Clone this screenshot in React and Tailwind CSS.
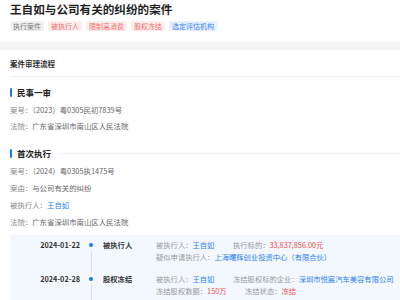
import React from 'react'

const FONT = { fontFamily: '"Noto Sans CJK SC", "Noto Sans", sans-serif' }

const TAGS = [
  { t: '执行案件', c: 'bg-[#f0f0f0] text-[#777]' },
  { t: '被执行人', c: 'bg-[#fdeeee] text-[#f26b6b]' },
  { t: '限制高消费', c: 'bg-[#fdeeee] text-[#f26b6b]' },
  { t: '股权冻结', c: 'bg-[#fdeeee] text-[#f26b6b]' },
  { t: '选定评估机构', c: 'bg-[#e8f1ff] text-[#3b82f0]' },
]

function Heading({ title, line }) {
  return (
    <div className="flex items-center h-[12px]">
      <span className="w-[2px] h-[9px] rounded-[1px] bg-[#1f7bf2]" />
      <span className="ml-[5px] text-[8.5px] leading-[12px] font-bold text-[#222]">{title}</span>
      {line && <span className="ml-[9px] flex-1 h-px bg-[#f0f1f3]" />}
    </div>
  )
}

function Field({ k, v, blue }) {
  return (
    <div>
      <span className="text-[#888]">{k}：</span>
      <span className={blue ? 'text-[#2f7ff0]' : 'text-[#666]'}>{v}</span>
    </div>
  )
}

function Step({ date, kind, children, last }) {
  return (
    <div className="flex">
      <div className="w-[70px] text-right font-bold text-[#333] leading-[12px]">{date}</div>
      <div className="ml-[6px] w-[10px] flex flex-col items-center">
        <div className="h-[12px] flex items-center">
          <span className="w-[4px] h-[4px] rounded-full bg-[#1f7bf2]" />
        </div>
        <div className="flex-1 w-px bg-[#d9dee6]" />
      </div>
      <div className="ml-[7px] w-[53px] font-bold text-[#333] leading-[12px]">{kind}</div>
      <div className={`flex-1 leading-[12px] whitespace-nowrap ${last ? 'pb-[4px]' : 'pb-[10px]'}`}>{children}</div>
    </div>
  )
}

export default function App() {
  return (
    <div style={FONT} className="w-[400px] h-[300px] overflow-hidden bg-white">
      <div className="h-[42px] px-[10px] pt-[2px]">
        <h1 className="text-[11.6px] leading-[14px] font-bold text-[#1f1f1f]">王自如与公司有关的纠纷的案件</h1>
        <div className="mt-[5px] flex gap-[4px]">
          {TAGS.map(x => (
            <span key={x.t} className={`h-[10px] px-[3px] rounded-[2px] text-[7px] leading-[10px] ${x.c}`}>{x.t}</span>
          ))}
        </div>
      </div>
      <div className="h-[8px] bg-[#f4f5f7]" />

      <div className="ml-[10px] pt-[8px] pb-[6px] border-b border-[#eef0f2] text-[7.5px] leading-[12px] font-bold text-[#333]">
        案件审理流程
      </div>

      <div className="px-[10px] text-[7.4px]">
        <div className="mt-[9px]"><Heading title="民事一审" /></div>
        <div className="mt-[4px] leading-[16px]">
          <Field k="案号" v="（2023）粤0305民初7839号" />
          <Field k="法院" v="广东省深圳市南山区人民法院" />
        </div>

        <div className="mt-[13px] -mr-[10px]"><Heading title="首次执行" line /></div>
        <div className="mt-[3px] leading-[17px]">
          <Field k="案号" v="（2024）粤0305执1475号" />
          <Field k="案由" v="与公司有关的纠纷" />
          <Field k="被执行人" v="王自如" blue />
          <Field k="法院" v="广东省深圳市南山区人民法院" />
        </div>

        <div className="mt-[5px] -mr-[10px] bg-[#f3f8ff] pt-[4px] text-[7.3px]">
          <Step date="2024-01-22" kind="被执行人">
            <div className="flex">
              <span className="w-[77px]"><span className="text-[#999]">被执行人：</span><span className="text-[#2f7ff0]">王自如</span></span>
              <span><span className="text-[#999]">执行标的：</span><span className="text-[#f04b4b]">33,837,856.00元</span></span>
            </div>
            <div><span className="text-[#999]">疑似申请执行人：</span><span className="text-[#2f7ff0]">上海曙辉创业投资中心（有限合伙）</span></div>
          </Step>
          <Step date="2024-02-28" kind="股权冻结" last>
            <div className="flex">
              <span className="w-[77px]"><span className="text-[#999]">被执行人：</span><span className="text-[#2f7ff0]">王自如</span></span>
              <span><span className="text-[#999]">冻结股权标的企业：</span><span className="text-[#2f7ff0]">深圳市悦宸汽车美容有限公司</span></span>
            </div>
            <div className="flex">
              <span className="w-[89px]"><span className="text-[#999]">冻结股权数额：</span><span className="text-[#f04b4b]">150万</span></span>
              <span><span className="text-[#999]">冻结状态：</span><span className="text-[#f04b4b]">冻结</span></span>
            </div>
          </Step>
        </div>
      </div>
    </div>
  )
}
